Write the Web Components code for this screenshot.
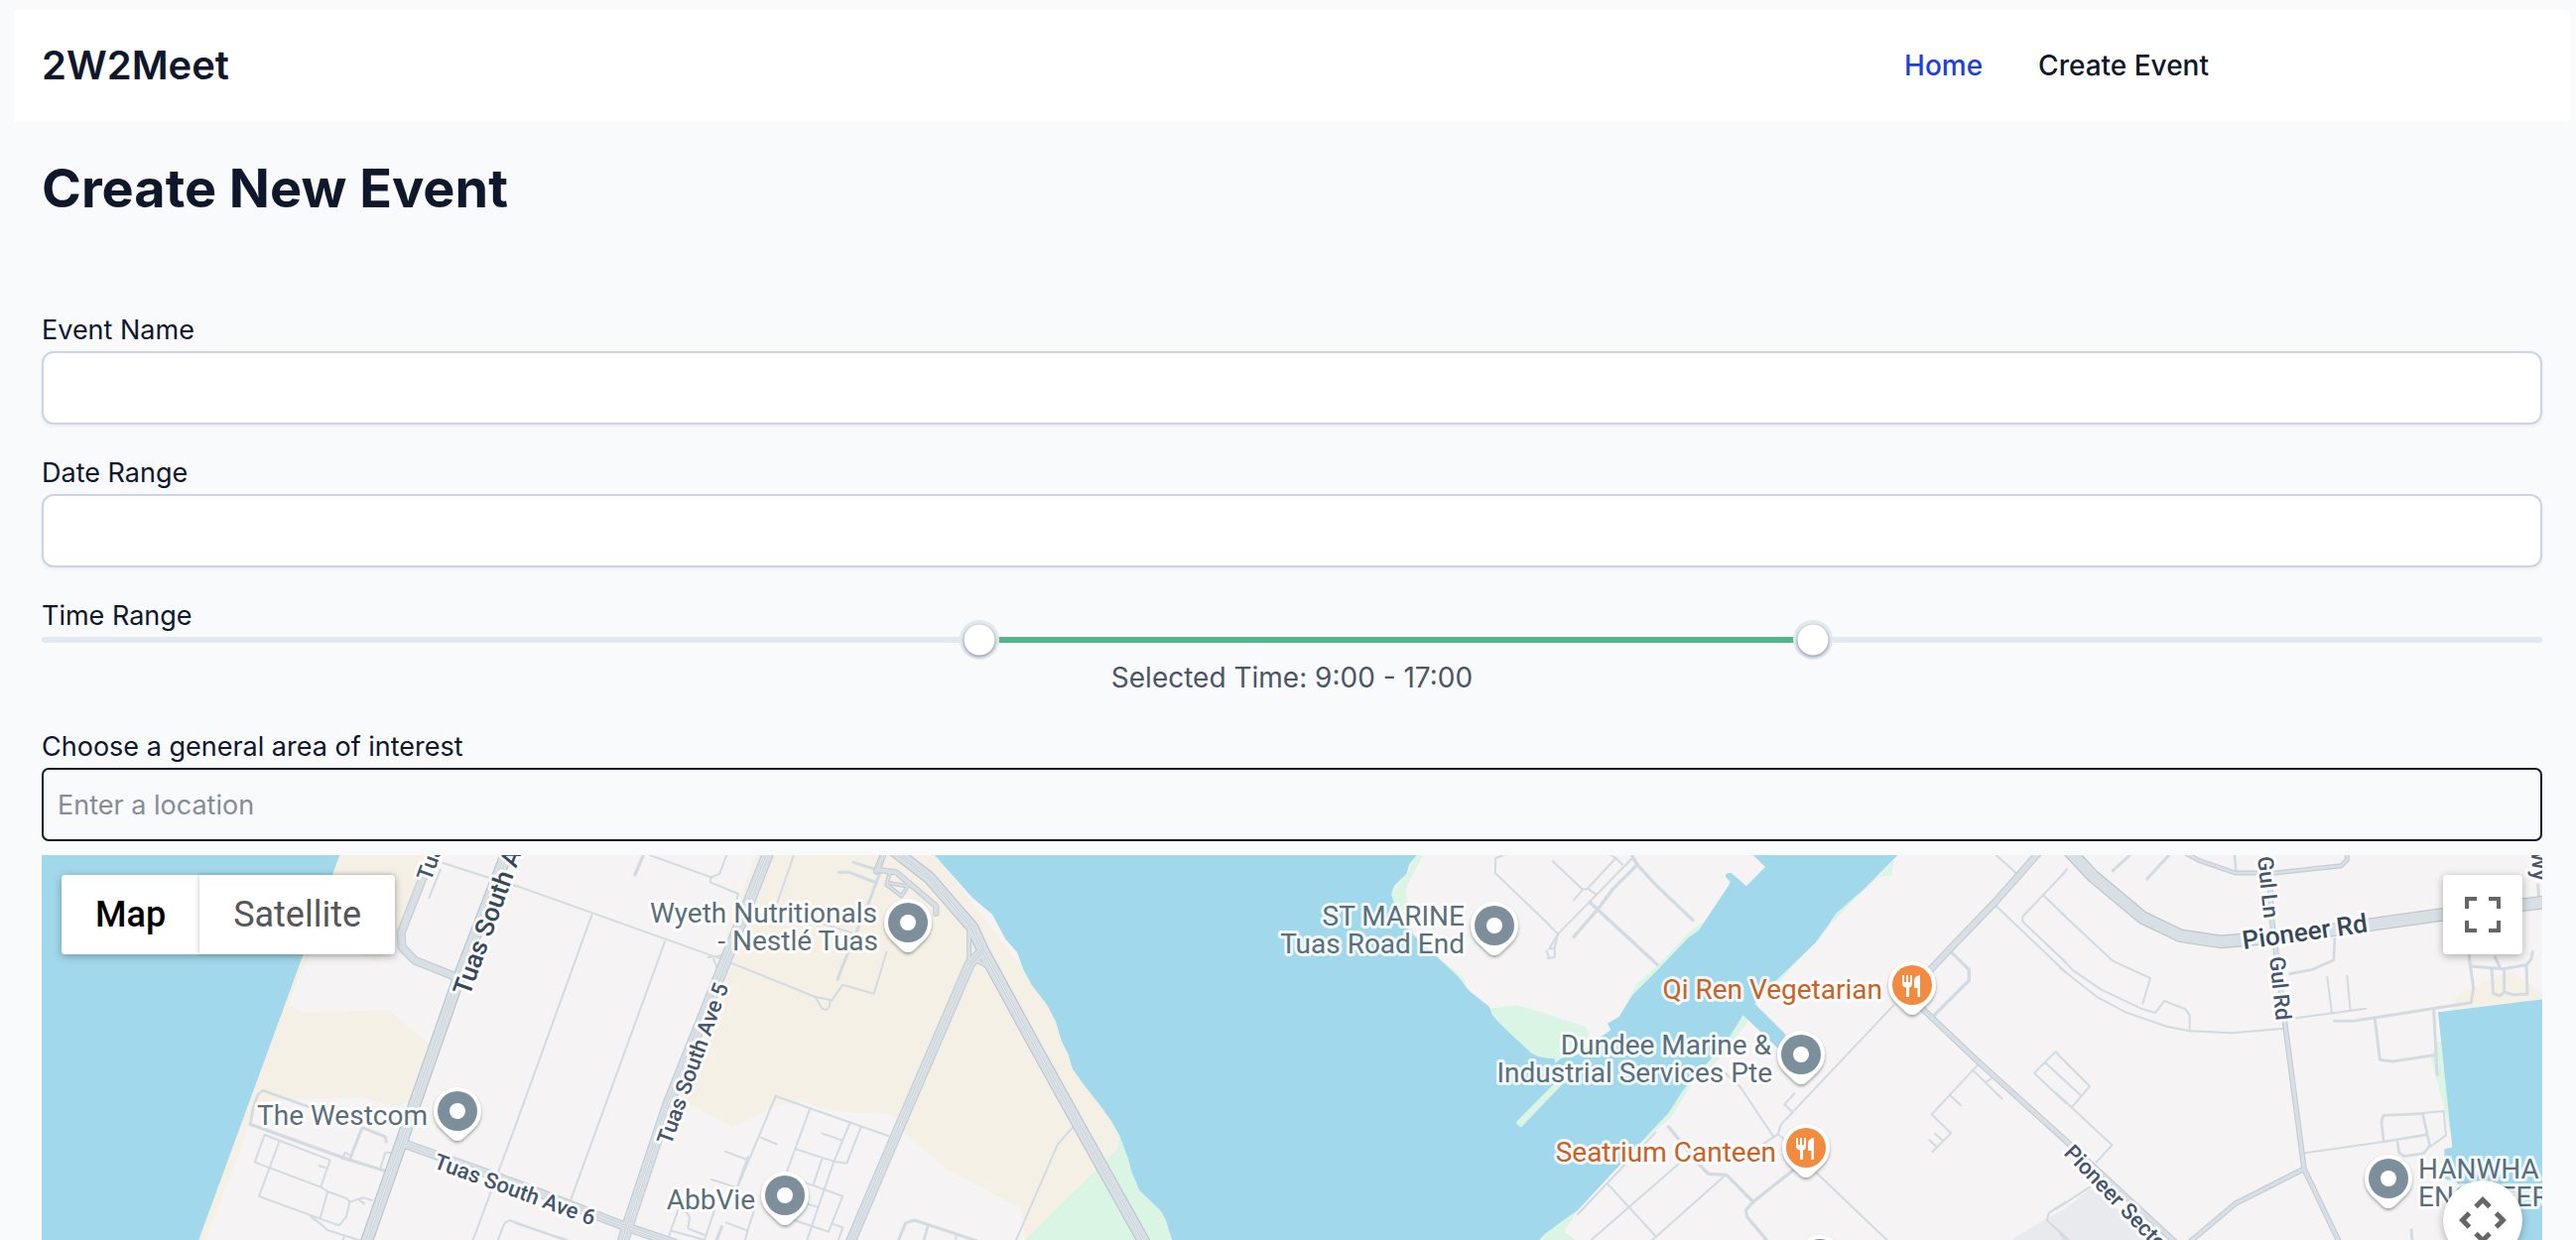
<!DOCTYPE html>
<html lang="en">
<head>
<meta charset="utf-8">
<meta name="viewport" content="width=device-width, initial-scale=1">
<title>2W2Meet – Create New Event</title>
<style>
html{font-size:28px;--ink:#0f172a;--line:#cbd5e1;--rail:#e2e8f0;--accent:#52b788}
body{margin:0;background:#f9fafc;color:var(--ink);font-family:Inter,"Liberation Sans",sans-serif;line-height:42px}
</style>
</head>
<body>
<event-page></event-page>
<script>
const define = (name, html, extra) => {
  const tpl = document.createElement('template');
  tpl.innerHTML = html;
  customElements.define(name, class extends HTMLElement {
    constructor() {
      super();
      this.attachShadow({mode: 'open'}).appendChild(tpl.content.cloneNode(true));
    }
    connectedCallback() { if (extra) extra(this, this.shadowRoot); }
  });
};

/* ---------- navigation ---------- */
define('site-nav', `
<style>
:host{display:block;background:#fff}
header{display:flex;align-items:center;justify-content:space-between;min-height:112px;padding:0 28px}
.brand{font-size:40px;font-weight:600;color:var(--ink);text-decoration:none}
nav{display:flex;gap:56px;margin-right:336px}
nav a{font-weight:500;color:var(--ink);text-decoration:none}
nav a[aria-current]{color:#1d3fdc}
</style>
<header>
  <a class="brand" href="#">2W2Meet</a>
  <nav><a href="#" aria-current="page">Home</a><a href="#create">Create Event</a></nav>
</header>`);

/* ---------- labelled text box ---------- */
define('text-field', `
<style>
:host{display:block;font-size:27px}
label{display:block}
input{display:block;box-sizing:border-box;width:100%;height:74px;padding:0 14px;border:2px solid var(--line);border-radius:12px;background:#fff;font:inherit;color:inherit;outline:none;box-shadow:0 2px 4px rgba(15,23,42,.06)}
:host([plain]) input{background:transparent;border-color:var(--ink);border-radius:7px;box-shadow:none}
input::placeholder{color:#868c98;opacity:1}
</style>
<label for="box"></label><input id="box" type="text">`, (el, root) => {
  root.querySelector('label').textContent = el.getAttribute('label');
  root.querySelector('input').placeholder = el.getAttribute('placeholder') || '';
});

/* ---------- two-thumb time slider ---------- */
define('time-range', `
<style>
:host{display:block}
.label,.value{display:block}
.label{font-size:27px}
.slider{display:grid;height:6px;border-radius:3px;background:linear-gradient(to right,var(--rail) var(--from),var(--accent) var(--from) var(--to),var(--rail) var(--to))}
input{grid-area:1/1;-webkit-appearance:none;appearance:none;width:calc(100% + 40px);height:40px;margin:-17px -20px;background:none;pointer-events:none;outline:none}
input::-webkit-slider-thumb{-webkit-appearance:none;width:40px;height:40px;border-radius:50%;pointer-events:auto;
background:radial-gradient(circle at 50% 50%,#fff 15px,transparent 16px),radial-gradient(circle at 50% 21px,#a3acb8 15px,var(--rail) 18px)}
.value{margin-top:14px;text-align:center;color:#4b5563}
</style>
<label class="label" for="start">Time Range</label>
<div class="slider">
  <input id="start" type="range" min="0" max="24" value="9">
  <input id="end" type="range" min="0" max="24" value="17" aria-label="End time">
</div>
<output class="value" for="start end"></output>`, (el, root) => {
  const [a, b] = root.querySelectorAll('input');
  const draw = () => {
    const s = root.querySelector('.slider').style;
    s.setProperty('--from', a.value / 24 * 100 + '%');
    s.setProperty('--to', b.value / 24 * 100 + '%');
    root.querySelector('output').textContent = `Selected Time: ${a.value}:00 - ${b.value}:00`;
  };
  a.oninput = b.oninput = draw;
  draw();
});

/* ---------- map ---------- */
/* Each tile: origin x, then its roads as [width, kind, points]; tile units are thirds of a pixel.
   kind: l = lane, c = cased street, d = divided road */
const TILES = [
 [0, [
  [34,'d','1530,36 1390,400 1215,900 1110,1200'],
  [22,'c','1280,100 1213,270 1215,315 1255,355 1380,405'],
  [24,'d','1230,912 1560,1030 1900,1163 2040,1210'],
  [6,'l','1340,60 1480,105 1560,130'],[6,'l','1332,80 1297,165'],
  [8,'l','757,850 765,800 780,760 795,748 950,803'],[10,'l','757,850 1040,952 1160,990'],
  [9,'l','1060,950 1095,860 1165,888 1168,903'],[6,'l','1150,985 1165,935 1180,935'],[6,'l','1035,955 1043,935 1060,945'],
  [6,'l','800,882 770,965 970,1040 998,958 800,882'],[6,'l','965,975 985,982'],
  [6,'l','845,900 783,1068 1025,1156 1047,1130 1057,1085 1050,1075 990,1053 970,1040'],
  [6,'l','990,1055 968,1135'],[6,'l','1057,1085 1100,1072 1125,1080'],[6,'l','1085,1078 1102,1091'],
  [6,'l','940,1130 968,1150 990,1170 1100,1205'],[6,'l','1040,1190 1035,1205'],
  [6,'l','1790,215 1560,850 1430,1200'],[6,'l','1505,1200 1525,1150 1540,1140 1720,1205']]],
 [520, [
  [32,'d','760,36 628,370 460,790 335,1165 325,1200'],
  [34,'d','1140,20 1250,105 1380,255 1412,325 1560,597 1700,850 1900,1208'],
  [28,'d','1412,325 1372,365 1150,880 1012,1205'],
  [10,'c','1370,265 1370,350'],[10,'c','1395,355 1425,372'],[16,'d','1112,30 1090,85'],
  [14,'c','1090,80 1150,88 1270,190 1270,212'],[8,'c','1130,90 1120,125 1165,160 1185,130 1125,120'],
  [6,'l','-10,125 620,350 905,465 955,475 988,428 1082,455 1120,330'],
  [6,'l','905,465 925,500 937,504 948,495 950,475'],[6,'l','580,345 625,340'],[6,'l','597,350 610,380'],
  [6,'l','450,298 165,1080'],[10,'l','385,36 360,95'],[6,'l','405,36 590,103 615,93 637,36'],
  [6,'l','590,103 587,118 672,153 660,200'],[6,'l','840,36 790,180'],
  [9,'l','1020,58 1090,80'],[9,'l','975,88 1008,88 1090,120'],[9,'l','1100,90 1070,170 1000,340 972,412'],[6,'l','930,245 1020,272'],
  [6,'l','670,1040 785,765 1125,885'],[6,'l','890,800 820,990'],[6,'l','925,878 985,898'],
  [6,'l','1010,845 960,965 880,1200'],[6,'l','1043,858 1000,968 960,962 845,925'],[6,'l','925,955 900,1030'],
  [6,'l','740,890 788,910'],[6,'l','632,932 698,957 702,948'],[6,'l','698,957 670,1035'],[6,'l','590,1017 680,1045'],
  [6,'l','870,1025 988,1068 945,1175'],[6,'l','845,1080 910,1100'],[6,'l','490,1110 465,1180 460,1205'],[6,'l','470,1172 570,1200 600,1110'],
  [6,'l','510,1110 525,1130 520,1165 570,1185'],[6,'l','635,1147 700,1172 720,1110'],[6,'l','700,1172 692,1205'],
  [10,'l','622,1160 605,1205'],[6,'l','840,1140 945,1175'],[6,'l','955,1150 988,1162 975,1200'],[6,'l','0,1150 155,1200'],
  [9,'l','1155,1205 1178,1148 1205,1140 1400,1205'],[8,'l','1245,1160 1232,1205'],[6,'l','1330,1185 1330,1205'],
  [6,'l','1690,852 1638,910 1510,1205']]],
 [1040, [[6,'l','1425,36 1402,45 1400,90 1565,248'],[6,'l','1555,325 1563,345']]],
 [1560, [
  [6,'l','15,55 105,140 120,137 205,45 190,36'],[6,'l','105,140 78,172'],[6,'l','255,45 125,178 30,275 3,320 20,316 20,345 0,348'],
  [6,'l','0,245 30,275 20,316'],[6,'l','120,137 145,155'],[6,'l','205,45 225,65'],
  [10,'l','255,40 270,65 325,125 438,233'],[10,'l','270,65 195,140 150,200 78,283'],[10,'l','125,178 150,200 330,367'],
  [18,'c','1480,33 1350,180 1215,320 1140,400'],[10,'l','1215,325 1273,383 1273,415 1165,523'],
  [14,'c','1110,480 1300,660 1560,895 1900,1210'],
  [6,'l','1045,490 705,850 695,880 650,910'],[6,'l','745,757 715,790 738,812'],[6,'l','530,690 580,735 680,885'],[6,'l','695,880 720,900'],
  [10,'l','365,858 415,920 440,955 485,1000 540,1003 620,1085 740,990'],[10,'l','620,1085 598,1110 602,1130 665,1205'],
  [6,'l','325,875 90,1122'],[6,'l','180,1030 325,1188'],[6,'l','395,970 125,1205'],[6,'l','535,1005 310,1205'],[6,'l','810,995 1030,1205'],
  [6,'l','1355,36 1415,90'],[6,'l','1350,185 1565,390'],[6,'l','1565,85 1435,222 1435,237 1565,360'],[6,'l','1500,160 1565,222'],
  [6,'l','1548,645 1535,630 1470,695 1565,785'],[6,'l','1503,663 1613,765'],
  [6,'l','1305,665 1160,820 1218,877 1163,933'],[6,'l','1215,762 1248,793'],[6,'l','1283,685 1373,773'],[6,'l','1325,722 1345,708'],
  [6,'l','1170,878 1192,898'],[6,'l','1153,898 1174,918'],[6,'l','1565,1085 1515,1118 1508,1140 1580,1205']]],
 [2076, [
  [36,'c','25,20 100,100 250,225 365,280 485,298 700,280 1160,215 1470,178'],
  [10,'c','380,30 420,52 530,90 650,90 850,68 868,50 868,30'],[8,'l','528,36 532,85'],
  [12,'c','630,36 640,230 652,320 680,545 738,985 845,1208'],[12,'c','738,985 530,1090 390,1208'],
  [9,'l','212,36 160,83'],[9,'l','330,36 263,108'],[6,'l','22,78 -2,105'],
  [6,'l','0,207 158,355 273,408 250,485'],[6,'l','0,343 40,385 125,443 245,500 288,513 315,477 380,502 392,520 392,568'],
  [6,'l','0,377 115,467 200,512 325,555 392,568 520,574 680,560'],
  [6,'l','690,532 925,500'],[6,'l','808,405 822,515'],[6,'l','868,402 878,505'],
  [8,'l','830,290 828,353 760,383 695,395'],[9,'l','830,538 890,537 1243,482 1250,440 1235,330'],
  [9,'l','1130,505 1140,700'],[9,'l','952,530 967,655 1005,660 1138,640'],
  [9,'l','1240,372 1340,380 1410,368 1424,352 1429,328'],[9,'l','1305,380 1310,455 1330,462 1343,450 1343,380'],
  [9,'l','1343,450 1370,458 1413,456 1410,370'],[9,'l','1315,345 1330,375'],[9,'l','1445,125 1448,165'],
  [8,'l','978,900 972,840 978,823 1097,818'],[6,'l','1097,816 1160,810 1167,883 1120,918'],[8,'l','1097,820 1118,915 1100,938 1040,947 1025,935 1020,903'],
  [6,'l','740,937 978,903'],[8,'l','978,903 1105,882'],
  [6,'l','0,645 90,735 35,800'],[6,'l','-10,1105 105,1030'],[6,'l','-12,755 157,913 110,965'],[9,'l','1062,1170 1065,1205'],[6,'l','0,1180 20,1205']]]
];
const tile = (x, inner) => `<g transform="translate(${x} 850) scale(.33333)">${inner}</g>`;
const line = (w, c, p) => `<polyline stroke-width="${w}" stroke="${c}" points="${p}"/>`;
const roads = () => {
  const lanes = TILES.map(([x, r]) => tile(x, r.filter(i => i[1] === 'l').map(i => line(i[0], '#d2dae2', i[2])).join(''))).join('');
  const casing = TILES.map(([x, r]) => tile(x, r.filter(i => i[1] !== 'l').map(i => line(i[0] + 5, i[0] > 33 ? '#b9c6cd' : '#c3cdd5', i[2])).join(''))).join('');
  const fill = TILES.map(([x, r]) => tile(x, r.filter(i => i[1] !== 'l').map(i => line(i[0] - 2, '#d8dfe5', i[2])).join(''))).join('');
  const mid = TILES.map(([x, r]) => tile(x, r.filter(i => i[1] === 'd').map(i => line(7, '#c6d0d8', i[2]) + line(3, '#eeefec', i[2])).join(''))).join('');
  return lanes + casing + fill + mid;
};
/* place pins: x, y, kind */
const PINS = [[461,1120,'dot'],[915,930,'dot'],[791,1205,'dot'],[1506,933,'dot'],[1815,1063,'dot'],[2407,1188,'dot'],[1834,1269,'dot'],[1927,993,'food'],[1820,1157,'food']];
/* place names: x, baseline, class, text */
const NAMES = [
 [431,1134,'e','The Westcom'],[884,930,'e','Wyeth Nutritionals'],[885,958,'e','- Nestlé Tuas'],[761,1219,'e','AbbVie'],
 [1476,933,'e','ST MARINE'],[1476,961,'e','Tuas Road End'],[1785,1063,'e','Dundee Marine &amp;'],[1786,1091,'e','Industrial Services Pte'],
 [1897,1007,'e food','Qi Ren Vegetarian'],[1790,1171,'e food','Seatrium Canteen'],[2437,1188,'','HANWHA'],[2437,1216,'','ENGINEER']];
/* road names: x, y, angle, class, text */
const STREETS = [
 [473,1005,-70,'big','Tuas South A'],[434,889,-70,'','Tua'],[676,1155,-70,'','Tuas South Ave 5'],[436,1177,20,'','Tuas South Ave 6'],
 [2275,864,84,'','Gul Ln'],[2287,965,84,'','Gul Rd'],[2261,957,-8,'big','Pioneer Rd'],[2079,1163,46,'','Pioneer Secto'],[2551,858,87,'','Wy']];

define('area-map', `
<style>
:host{display:block;position:relative;overflow:hidden;min-height:280px;background:#f5f3f3;font-family:Roboto,sans-serif}
svg.art{position:absolute;inset:0;width:100%;height:100%;display:block}
polyline{fill:none;stroke-linejoin:round;stroke-linecap:round}
text{font-size:28px;fill:#5a6f7b;stroke:#fff;stroke-opacity:.85;stroke-width:6px;stroke-linejoin:round;paint-order:stroke}
.e{text-anchor:end}
.food{fill:#cb6122}
.street{font-size:22px;font-weight:500;fill:#44546c}
.big{font-size:26px;fill:#36475a}
.sand{fill:#f5f0e5}.water{fill:#a1d8eb}.green{fill:#daf5e3}.grey{fill:#e8eaed}
.top{position:absolute;inset:20px 20px auto;display:flex;justify-content:space-between}
.types{display:flex;border-radius:4px;background:#fff;box-shadow:0 2px 8px rgba(0,0,0,.3)}
button{border:0;margin:0;padding:0 34px;height:80px;background:#fff;border-radius:4px;font:36px Roboto,sans-serif;color:#565656;cursor:pointer}
.types button[aria-pressed=true]{font-weight:500;color:#000;border-radius:4px 0 0 4px}
.types button+button{border-radius:0 4px 4px 0;box-shadow:-1px 0 4px rgba(0,0,0,.18)}
.icon{width:80px;padding:0;display:grid;place-items:center;box-shadow:0 2px 8px rgba(0,0,0,.3)}
.pan{position:absolute;right:20px;bottom:-20px;border-radius:50%}
</style>
<svg class="art" viewBox="42 862 2520 388" preserveAspectRatio="xMidYMin slice" role="img" aria-label="Map of Tuas">
<defs>
 <filter id="sh" x="-30%" y="-30%" width="160%" height="170%"><feDropShadow dx="0" dy="2" stdDeviation="1.5" flood-color="#3c5050" flood-opacity=".5"/></filter>
 <g id="drop"><path filter="url(#sh)" fill="#fff" d="M-17,17 A24,24 0 1 1 17,17 L6,27.500 Q0,32.500 -6,27.500 Z"/></g>
 <g id="dot"><use href="#drop"/><circle r="20" fill="#7c8f9b"/><circle r="8" fill="#fff"/></g>
 <g id="food"><use href="#drop"/><circle r="20" fill="#f28a3f"/>
  <path fill="#fff" d="M-10,-10h2v7h2v-7h2v7h2v-7h2v8q0,4-3,4.500V12h-3V2.500q-4-.5-4-4.500ZM8,-10V12H5.500V3H2V-4Q2,-9 8,-10Z"/></g>
</defs>
${tile(0,'<polygon class="sand" points="1027,36 1290,36 1215,260 1140,358 1085,336 935,336 885,450 875,490 920,513 1175,503 1297,610 1240,780 1200,798 1090,768 900,775 800,780 757,840 700,1000 620,1200 580,1200"/><polygon class="water" points="126,30 1029,30 599,1205 126,1205"/>')}
${tile(520,'<polygon class="sand" points="725,30 1265,30 1700,600 1825,885 1818,925 1540,1200 1527,1105 1300,985 1175,875 1135,820 950,810 860,780 800,790 655,858 525,790 470,745"/><polygon class="green" points="1825,885 1900,980 2000,1205 1535,1205 1560,1180 1818,925"/><rect x="742" y="34" width="12" height="6" fill="#2447c8"/>')}
${tile(1560,`<polygon class="green" points="590,520 607,535 530,640 430,735 375,825 280,908 240,900 540,600"/>
<polygon class="green" points="-177,500 -90,490 0,518 115,555 130,600 190,565 190,620 60,700 -50,670"/>
<polygon class="green" points="475,235 435,262 350,350 265,430 225,510 190,565 300,450 460,280"/>
<polygon class="green" points="1045,50 1038,98 1000,100 960,150 1057,36"/>
<polygon class="green" points="980,112 865,208 860,240"/><polygon class="green" points="680,400 790,315 690,430"/>
<polygon class="green" points="90,1105 50,1175 90,1205 -20,1205 0,1160"/>
<polygon class="green" points="-398,36 -378,36 -410,95 -430,140 -425,200 -400,300 -480,160 -428,92"/>
<polygon class="green" points="-345,335 -255,408 -245,450 -300,400"/>
<polygon class="grey" points="1390,1205 1570,1100 1640,1045 1850,1205"/>`)}
${tile(1040,`<polygon class="water" points="-300,30 1168,30 1140,65 1132,92 1095,130 1086,155 1095,180 1140,265 1220,340 1290,405 1320,445 1383,495 1390,515 1405,535 1440,570 1510,635 1530,645 1560,650 1580,652 1582,665 1600,650 1650,640 1750,565 1740,545 1775,525 1815,460 1890,385 1985,285 2015,265 2035,235 2108,125 2110,115 2097,102 2098,94 2106,89 2115,91 2160,130 2217,72 2174,30 2623,30 2520,135 2430,213 2410,245 2370,300 2250,415 2185,485 2280,580 2255,620 2150,520 2100,600 1970,745 1925,815 1845,900 1650,1110 1620,1130 1550,1182 1530,1205 425,1205 405,1140 390,1112 325,1050 300,990 290,950 265,885 240,840 200,785 160,735 122,682 110,640 90,600 72,540 45,488 0,430 -25,385 -45,330 -80,290 -120,215 -180,165"/>
<polygon class="green" points="1462,845 1478,860 1650,680 1630,675"/>`)}
${tile(2076,'<polygon class="sand" points="1180,510 1200,460 1360,385 1460,455 1460,490 1143,515"/><polygon class="green" points="1140,600 1155,600 1185,890 1122,650"/><polygon class="water" points="1143,511 1460,472 1460,1205 1300,1205 1200,1025 1162,1015 1162,925 1186,920"/>')}
${roads()}
${STREETS.map(([x,y,a,c,t]) => `<text class="street ${c}" transform="translate(${x} ${y}) rotate(${a})">${t}</text>`).join('')}
${NAMES.map(([x,y,c,t]) => `<text x="${x}" y="${y}" class="${c}">${t}</text>`).join('')}
${PINS.map(([x,y,k]) => `<use href="#${k}" x="${x}" y="${y}"/>`).join('')}
</svg>
<div class="top">
  <div class="types"><button type="button" aria-pressed="true">Map</button><button type="button" aria-pressed="false">Satellite</button></div>
  <button class="icon" type="button" aria-label="Toggle fullscreen view"><svg width="36" height="36" viewBox="0 0 36 36" fill="#666"><path d="M0,0h12v4H4v8H0ZM24,0h12v12h-4V4h-8ZM0,24h4v8h8v4H0ZM32,24h4v12H24v-4h8Z"/></svg></button>
</div>
<button class="icon pan" type="button" aria-label="Map camera controls"><svg width="48" height="48" viewBox="0 0 48 48" fill="none" stroke="#666" stroke-width="5"><path d="M17,10.500 24,3.500 31,10.500M17,37.500 24,44.500 31,37.500M10.500,17 3.500,24 10.500,31M37.500,17 44.500,24 37.500,31"/></svg></button>`);

/* ---------- page ---------- */
define('event-page', `
<style>
:host{display:flex;flex-direction:column;box-sizing:border-box;height:100vh;min-height:1100px;padding:10px 6px 0 14px}
main{flex:1;display:flex;flex-direction:column;padding:28px 28px 0;min-height:0}
h1{margin:0 0 82px;font-size:54px;line-height:80px;font-weight:700}
form{flex:1;display:flex;flex-direction:column;gap:28px;min-height:0}
.area{flex:1;display:flex;flex-direction:column;gap:14px;min-height:0}
area-map{flex:1}
</style>
<site-nav></site-nav>
<main>
  <h1>Create New Event</h1>
  <form>
    <text-field label="Event Name"></text-field>
    <text-field label="Date Range"></text-field>
    <time-range></time-range>
    <div class="area">
      <text-field plain label="Choose a general area of interest" placeholder="Enter a location"></text-field>
      <area-map></area-map>
    </div>
  </form>
</main>`);
</script>
</body>
</html>
